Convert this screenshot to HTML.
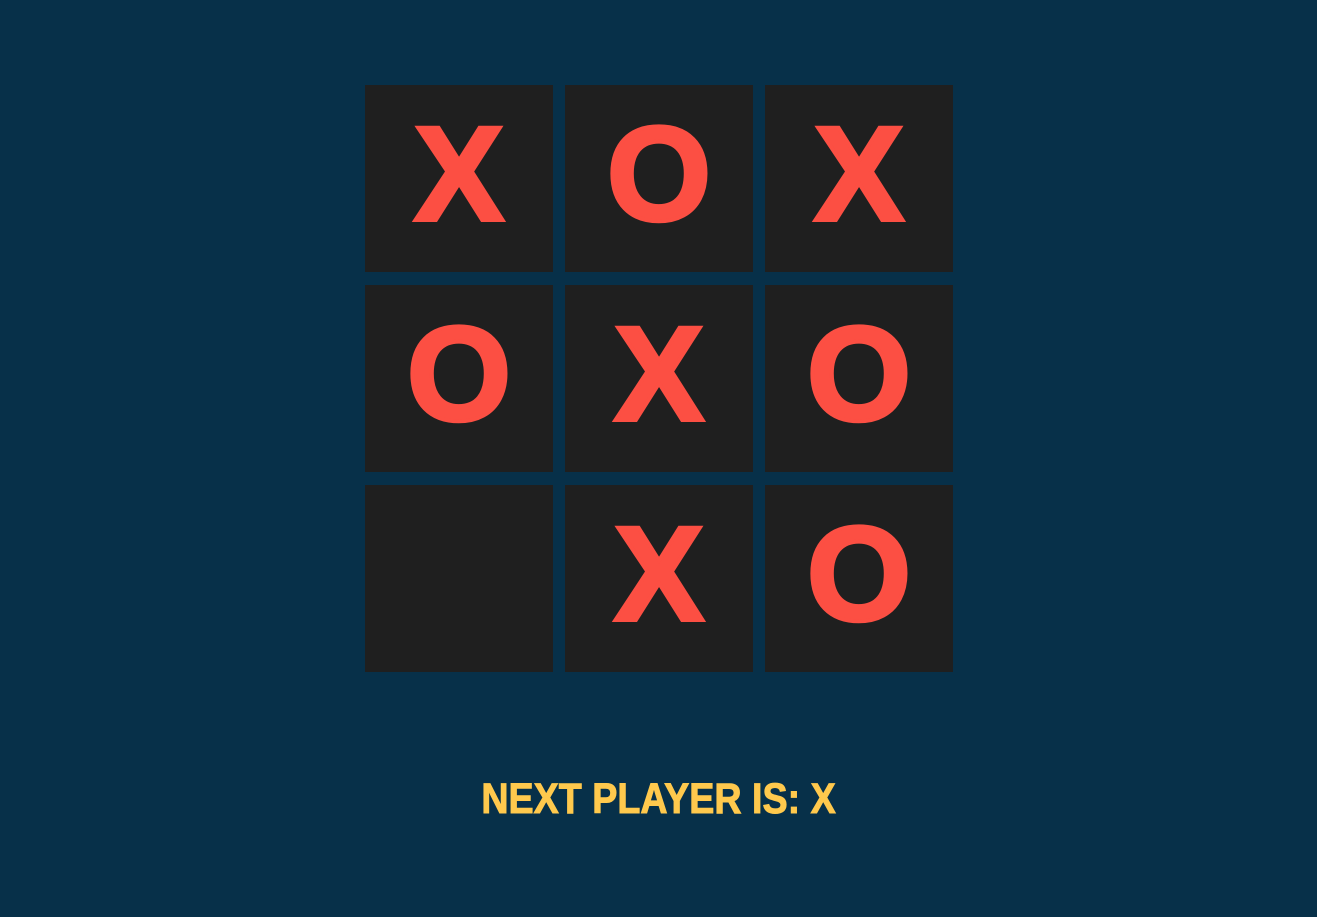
<!DOCTYPE html>
<html><head><meta charset="utf-8"><style>
html,body{margin:0;padding:0;}
body{width:1317px;height:917px;background:#073049;position:relative;overflow:hidden;font-family:"Liberation Sans",sans-serif;font-weight:bold;}
.c{position:absolute;width:188px;height:187px;background:#1f1f1f;}
.c span{position:absolute;left:0;right:0;top:23px;height:134px;line-height:134px;font-size:134px;text-align:center;color:#fc4f43;-webkit-text-stroke:4px #fc4f43;}
.t{position:absolute;left:0;width:1317px;top:778px;font-size:43px;line-height:43px;text-align:center;color:#ffc94d;transform:scaleX(0.876);transform-origin:659px 0;-webkit-text-stroke:1px #ffc94d;}
</style></head><body>
<div class="c" style="left:365px;top:85px"><span>X</span></div>
<div class="c" style="left:565px;top:85px"><span>O</span></div>
<div class="c" style="left:765px;top:85px"><span>X</span></div>
<div class="c" style="left:365px;top:285px"><span>O</span></div>
<div class="c" style="left:565px;top:285px"><span>X</span></div>
<div class="c" style="left:765px;top:285px"><span>O</span></div>
<div class="c" style="left:365px;top:485px"></div>
<div class="c" style="left:565px;top:485px"><span>X</span></div>
<div class="c" style="left:765px;top:485px"><span>O</span></div>
<div class="t">NEXT PLAYER IS: X</div>
</body></html>
